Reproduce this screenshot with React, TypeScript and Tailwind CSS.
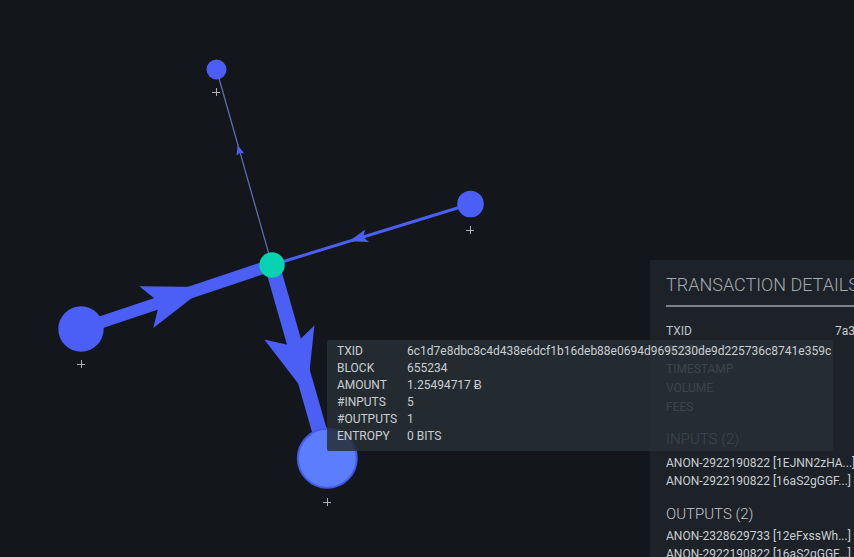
import React from 'react';

type Pt = [number, number];

const BLUE = '#4b5ef6';

// arrow head polygon: tip point, direction it points to, length, half width, notch depth
function arrowPoints(tip: Pt, dir: Pt, len: number, half: number, notch: number) {
  const d = Math.hypot(dir[0], dir[1]);
  const u: Pt = [dir[0] / d, dir[1] / d];
  const n: Pt = [-u[1], u[0]];
  const back: Pt = [tip[0] - u[0] * len, tip[1] - u[1] * len];
  const pts: Pt[] = [
    tip,
    [back[0] + n[0] * half, back[1] + n[1] * half],
    [tip[0] - u[0] * (len - notch), tip[1] - u[1] * (len - notch)],
    [back[0] - n[0] * half, back[1] - n[1] * half],
  ];
  return pts.map((p) => p.map((v) => v.toFixed(1)).join(',')).join(' ');
}

const center: Pt = [272, 265];

const nodes = [
  { id: 'top', at: [216.5, 69.5] as Pt, r: 10 },
  { id: 'right', at: [470.5, 204] as Pt, r: 13.3 },
  { id: 'left', at: [81, 329] as Pt, r: 22.7 },
];

function Plus({ x, y }: { x: number; y: number }) {
  return (
    <g stroke="#a9afb4" strokeWidth="1">
      <line x1={x - 4} y1={y + 0.5} x2={x + 4} y2={y + 0.5} />
      <line x1={x + 0.5} y1={y - 4} x2={x + 0.5} y2={y + 4} />
    </g>
  );
}

function Graph() {
  return (
    <svg className="absolute inset-0" width="854" height="557" viewBox="0 0 854 557">
      {/* center -> top, thin */}
      <line x1={center[0]} y1={center[1]} x2={216.5} y2={69.5} stroke="#5c6bab" strokeWidth="1.3" />
      <polygon points={arrowPoints([237.6, 145], [-56, -195], 10, 4, 2)} fill={BLUE} />

      {/* right -> center */}
      <line x1={470.5} y1={204} x2={center[0]} y2={center[1]} stroke={BLUE} strokeWidth="3" />
      <polygon points={arrowPoints([349, 241.3], [-198, 61], 19, 6.5, 4)} fill={BLUE} />

      {/* left -> center, thick */}
      <line x1={81} y1={329} x2={center[0]} y2={center[1]} stroke={BLUE} strokeWidth="12" />
      <polygon points={arrowPoints([206, 287], [191, -64], 63, 22, 14)} fill={BLUE} />

      {/* center -> bottom, thickest */}
      <line x1={center[0]} y1={center[1]} x2={327.3} y2={458.3} stroke={BLUE} strokeWidth="15" />
      <polygon points={arrowPoints([307, 395], [55, 195], 65, 26, 14)} fill={BLUE} />

      {nodes.map((n) => (
        <circle key={n.id} cx={n.at[0]} cy={n.at[1]} r={n.r} fill={BLUE} />
      ))}
      <circle cx={center[0]} cy={center[1]} r="12.7" fill="#07d3b3" />
      <circle cx={327.3} cy={458.3} r="29.5" fill="#5b7dfe" stroke="#4658e6" strokeWidth="2" />

      <Plus x={216} y={92} />
      <Plus x={470} y={230} />
      <Plus x={81} y={364} />
      <Plus x={327} y={502} />
    </svg>
  );
}

const detailRows = [
  { label: 'TXID', value: '7a3f0c9d2b8e41a6c5d7e90b3f12a4c8e6d5b7a9' },
  { label: 'BLOCK', value: '' },
  { label: 'TIMESTAMP', value: '' },
  { label: 'VOLUME', value: '' },
  { label: 'FEES', value: '' },
];

const inputs = ['ANON-2922190822 [1EJNN2zHA...]', 'ANON-2922190822 [16aS2gGGF...]'];
const outputs = ['ANON-2328629733 [12eFxssWh...]', 'ANON-2922190822 [16aS2gGGF...]'];

function DetailsPanel() {
  return (
    <div className="absolute left-[650px] top-[260px] w-[340px] h-[320px] bg-[#1c2227] pl-[16px] pt-[13px] font-['Roboto',sans-serif]">
      <h2 className="text-[18px] leading-[24px] font-light text-[#a3a9ae] whitespace-nowrap">TRANSACTION DETAILS</h2>
      <div className="mt-[8px] h-[2px] bg-[#7b8288]" />

      <div className="mt-[15px] grid grid-cols-[169px_1fr] text-[12px] leading-[19px] text-[#bcc2c7]">
        {detailRows.map((r) => (
          <React.Fragment key={r.label}>
            <span>{r.label}</span>
            <span className="whitespace-nowrap text-[#c7ccd0]">{r.value}</span>
          </React.Fragment>
        ))}
      </div>

      <h3 className="mt-[12px] text-[15px] leading-[20px] font-light text-[#c2c7cb]">INPUTS (2)</h3>
      <ul className="mt-[5px] text-[12px] leading-[18px] text-[#c9ced2]">
        {inputs.map((i, idx) => (
          <li key={idx} className="whitespace-nowrap">{i}</li>
        ))}
      </ul>

      <h3 className="mt-[14px] text-[15px] leading-[20px] font-light text-[#c2c7cb]">OUTPUTS (2)</h3>
      <ul className="mt-[3px] text-[12px] leading-[18px] text-[#c9ced2]">
        {outputs.map((o, idx) => (
          <li key={idx} className="whitespace-nowrap">{o}</li>
        ))}
      </ul>
    </div>
  );
}

const tipRows = [
  ['TXID', '6c1d7e8dbc8c4d438e6dcf1b16deb88e0694d9695230de9d225736c8741e359c'],
  ['BLOCK', '655234'],
  ['AMOUNT', '1.25494717 Ƀ'],
  ['#INPUTS', '5'],
  ['#OUTPUTS', '1'],
  ['ENTROPY', '0 BITS'],
];

function Tooltip() {
  return (
    <div className="absolute left-[327px] top-[340px] w-[506px] h-[111px] rounded-[2px] bg-[rgba(39,46,53,0.86)] pl-[10px] pt-[3px] font-['Roboto',sans-serif]">
      <div className="grid grid-cols-[70px_1fr] text-[12px] leading-[17px] text-[#caced2]">
        {tipRows.map(([k, v]) => (
          <React.Fragment key={k}>
            <span>{k}</span>
            <span className="whitespace-nowrap">{v}</span>
          </React.Fragment>
        ))}
      </div>
    </div>
  );
}

export default function App() {
  return (
    <div className="relative w-[854px] h-[557px] overflow-hidden bg-[#13171b]">
      <Graph />
      <DetailsPanel />
      <Tooltip />
    </div>
  );
}
